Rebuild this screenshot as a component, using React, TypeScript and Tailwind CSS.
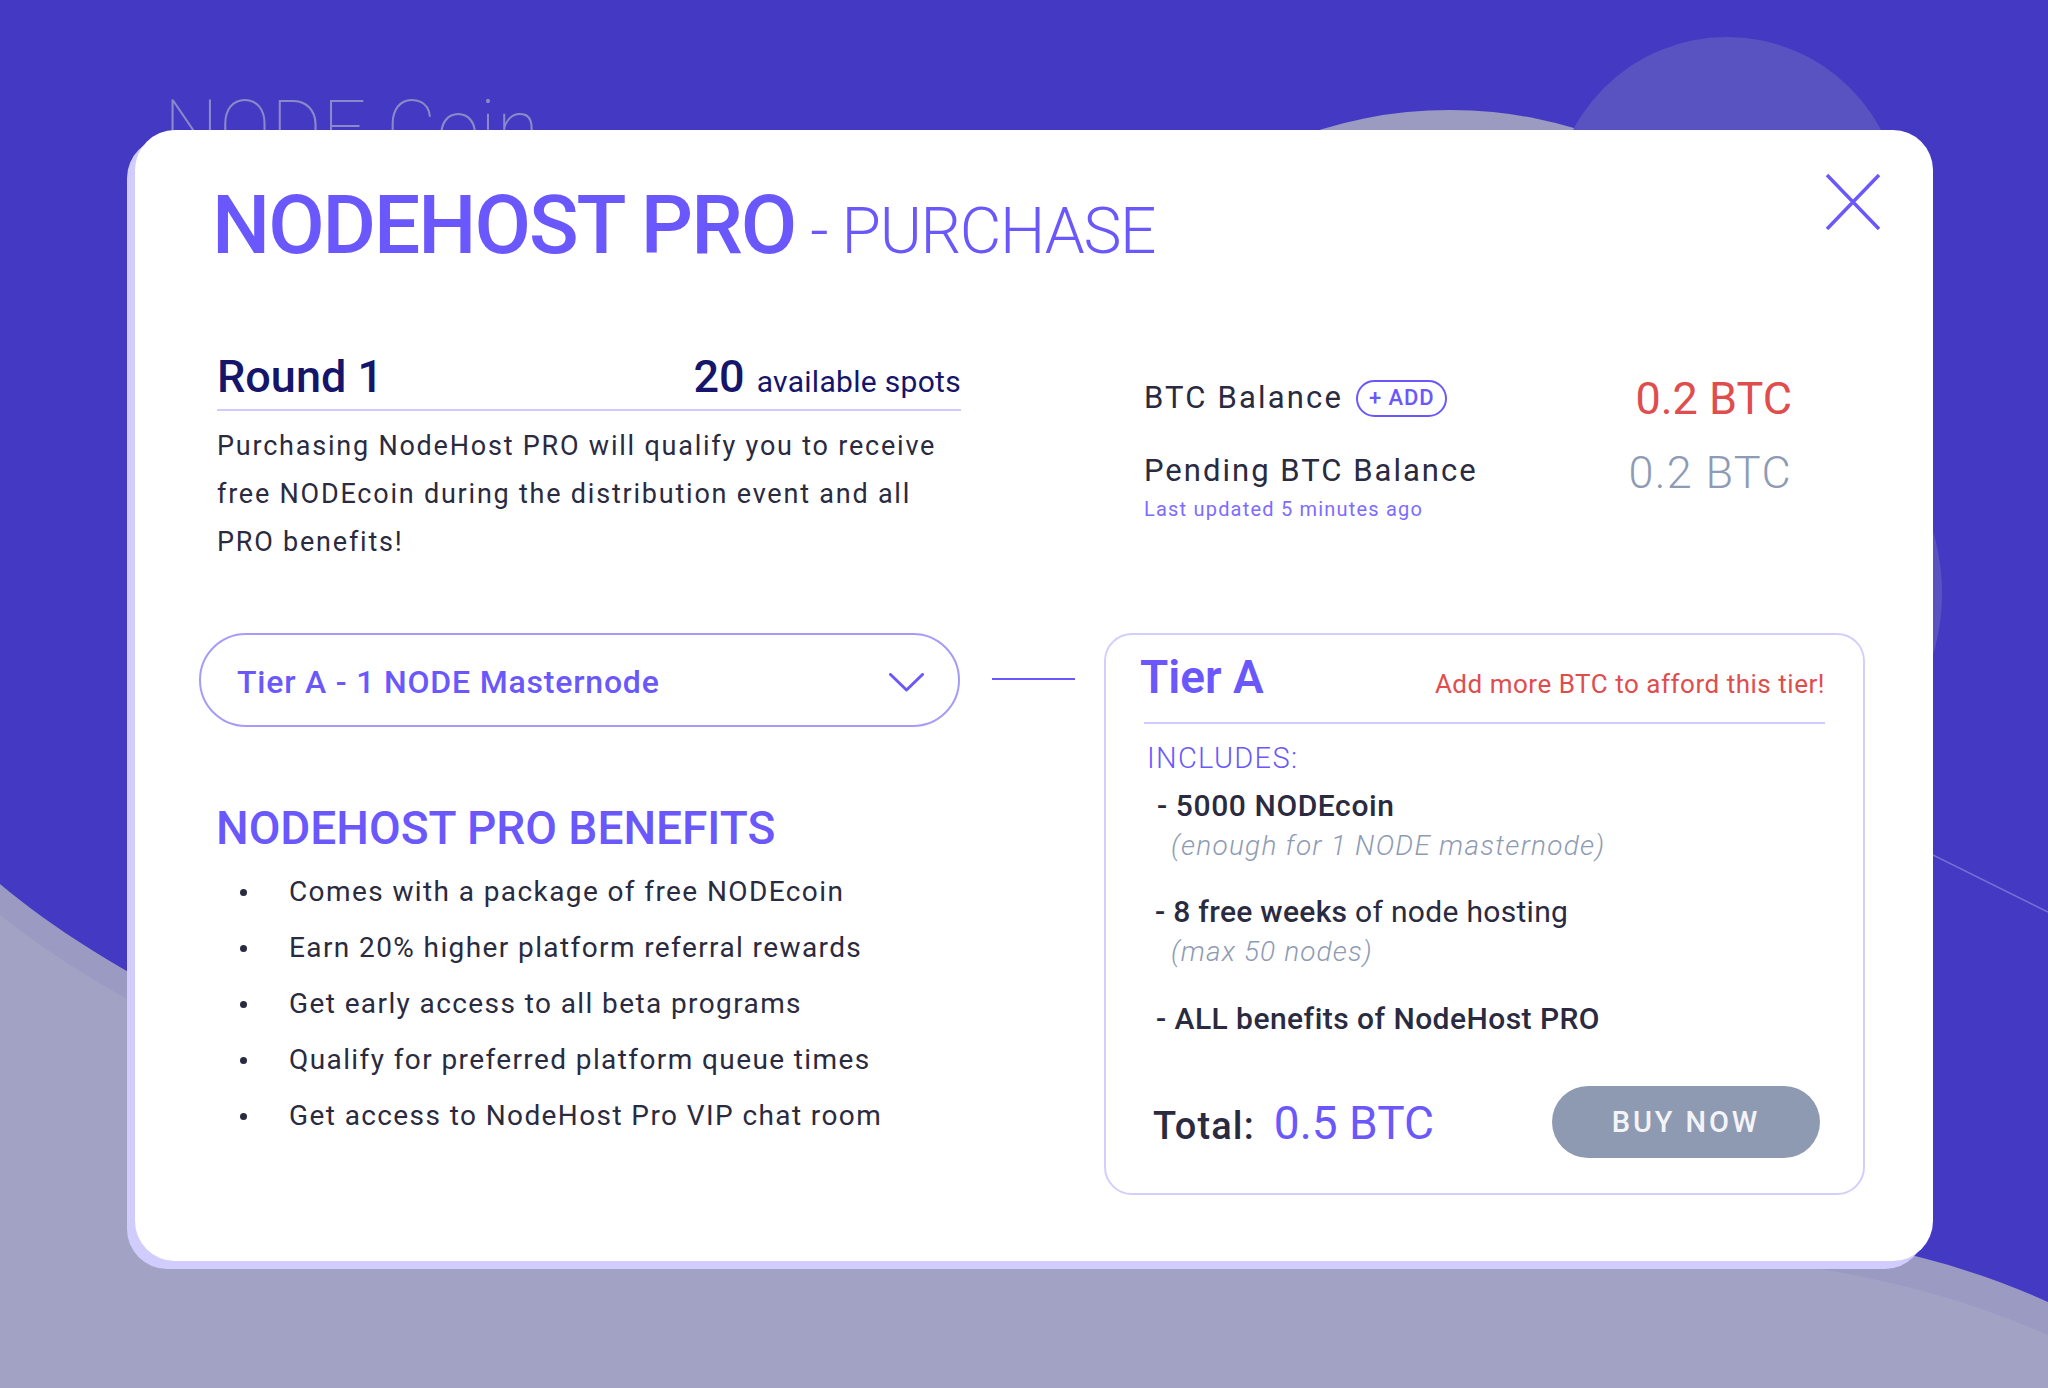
import React from "react";

const PURPLE = "text-[#6a58fd]";

function CloseIcon() {
  return (
    <svg width="56" height="56" viewBox="0 0 56 56" fill="none">
      <path d="M2 1 L54 55 M54 1 L2 55" stroke="#6a58fd" strokeWidth="3.5" strokeLinecap="butt" />
    </svg>
  );
}

function Chevron() {
  return (
    <svg width="35" height="19" viewBox="0 0 35 19" fill="none">
      <path d="M1.5 1.5 L17.5 17 L33.5 1.5" stroke="#6a58fd" strokeWidth="3" strokeLinecap="round" strokeLinejoin="round" />
    </svg>
  );
}

const benefits = [
  "Comes with a package of free NODEcoin",
  "Earn 20% higher platform referral rewards",
  "Get early access to all beta programs",
  "Qualify for preferred platform queue times",
  "Get access to NodeHost Pro VIP chat room",
];

export default function App() {
  return (
    <div className="relative w-[2048px] h-[1388px] overflow-hidden bg-[#4439c3] font-['Roboto',sans-serif]">
      <svg className="absolute inset-0" width="2048" height="1388" viewBox="0 0 2048 1388">
        <circle cx="1450" cy="549" r="439" fill="#9b9bc1" />
        <circle cx="1727" cy="211" r="174" fill="#5953c1" />
        <circle cx="1724" cy="593" r="218" fill="#5953c1" />
        <line x1="1600" y1="690" x2="2048" y2="912" stroke="#7570d2" strokeWidth="1.5" />
        <path d="M0 884 C150 1010 500 1180 1000 1200 C1500 1220 1800 1190 2048 1302 L2048 1388 L0 1388 Z" fill="#9b9ac3" />
        <path d="M0 915 C150 1035 500 1205 1000 1225 C1500 1245 1800 1225 2048 1335 L2048 1388 L0 1388 Z" fill="#a2a2c5" />
      </svg>

      <div className="relative pt-[91px] pl-[164px] text-[77px] leading-[77px] font-thin tracking-[0.01em] text-[#8c89c9]">
        NODE Coin
      </div>

      <div className="absolute left-[135px] top-[130px] w-[1798px] h-[1131px] rounded-[40px] bg-white shadow-[-8px_8px_0_0_#d0cdfd] pt-[54px]">
        <button className="absolute top-[44px] right-[52px] w-[56px] h-[56px]">
          <CloseIcon />
        </button>

        <div className="flex items-baseline pl-[77px]">
          <span className={`text-[82px] leading-[82px] font-medium tracking-[-0.025em] ${PURPLE}`}>NODEHOST PRO</span>
          <span className={`ml-[15px] text-[64px] leading-[64px] font-light tracking-[-0.02em] ${PURPLE}`}>- PURCHASE</span>
        </div>

        <div className="flex mt-[89px] pl-[82px]">
          <div className="w-[744px]">
            <div className="flex items-baseline justify-between border-b-2 border-[#cfcbfc] pb-[10px] text-[#15156b]">
              <span className="text-[45px] leading-[44px] font-medium">Round 1</span>
              <span className="flex items-baseline">
                <span className="text-[45px] leading-[44px] font-medium">20</span>
                <span className="ml-[12px] text-[30px] leading-[30px] tracking-[0.01em]">available spots</span>
              </span>
            </div>
            <p className="mt-[11px] text-[27px] leading-[48px] tracking-[0.066em] text-[#2a2a40]">
              Purchasing NodeHost PRO will qualify you to receive
              <br />
              free NODEcoin during the distribution event and all
              <br />
              PRO benefits!
            </p>
          </div>

          <div className="ml-[183px] w-[648px] flex justify-between">
            <div className="mt-[23px] text-[#2a2a40]">
              <div className="flex items-center">
                <span className="text-[31px] leading-[40px] tracking-[0.07em]">BTC Balance</span>
                <span className={`ml-[13px] h-[37px] px-[11px] rounded-full border-2 border-[#6a58fd] flex items-center text-[22px] leading-none font-medium tracking-[0.04em] ${PURPLE}`}>
                  + ADD
                </span>
              </div>
              <div className="mt-[33px] text-[31px] leading-[40px] tracking-[0.065em]">Pending BTC Balance</div>
              <div className="mt-[5px] text-[20px] leading-[26px] tracking-[0.06em] text-[#7c6cff]">Last updated 5 minutes ago</div>
            </div>
            <div className="mt-[7px] text-right text-[45px] leading-[74px]">
              <div className="text-[#e04d4d]">0.2 BTC</div>
              <div className="text-[#8e9bb4] font-light tracking-[0.03em]">0.2 BTC</div>
            </div>
          </div>
        </div>

        <div className="mt-[67px] pl-[64px] flex items-start">
          <div className="w-[761px]">
            <div className="h-[94px] rounded-full border-2 border-[#a59cf7] flex items-center justify-between pl-[36px] pr-[34px] pt-[4px]">
              <span className={`text-[32px] leading-[32px] font-medium tracking-[0.025em] ${PURPLE}`}>Tier A - 1 NODE Masternode</span>
              <Chevron />
            </div>
            <h2 className={`mt-[78px] ml-[17px] text-[46px] leading-[46px] font-medium ${PURPLE}`}>NODEHOST PRO BENEFITS</h2>
            <ul className="mt-[13px] text-[#2a2a40]">
              {benefits.map((b) => (
                <li key={b} className="flex items-center h-[56px]">
                  <span className="ml-[41px] w-[7px] h-[7px] rounded-full bg-[#2a2a40]" />
                  <span className="ml-[42px] text-[28px] leading-[56px] tracking-[0.05em]">{b}</span>
                </li>
              ))}
            </ul>
          </div>

          <div className="mt-[45px] ml-[32px] w-[83px] h-[2px] bg-[#6a58fd]" />

          <div className="ml-[29px] w-[761px] h-[562px] rounded-[28px] border-2 border-[#d3cffd] px-[38px] pt-[19px] pb-[35px] flex flex-col">
            <div className="flex items-baseline justify-between border-b-2 border-[#cfcbfc] pb-[22px]">
              <span className={`-ml-[4px] text-[46px] leading-[46px] font-semibold ${PURPLE}`}>Tier A</span>
              <span className="text-[26px] leading-[26px] tracking-[0.02em] text-[#e04d4d]">Add more BTC to afford this tier!</span>
            </div>
            <div className={`mt-[20px] pl-[3px] text-[29px] leading-[29px] font-light tracking-[0.045em] ${PURPLE}`}>INCLUDES:</div>

            <div className="mt-[13px] pl-[13px] text-[#2a2a40]">
              <div className="text-[30px] leading-[40px] font-medium tracking-[0.02em]">- 5000 NODEcoin</div>
              <div className="pl-[14px] text-[28px] leading-[40px] italic font-light tracking-[0.045em] text-[#8e9bb4]">(enough for 1 NODE masternode)</div>
            </div>
            <div className="mt-[26px] pl-[11px] text-[#2a2a40]">
              <div className="text-[30px] leading-[40px] tracking-[0.01em]">
                <span className="font-medium">- 8 free weeks</span> of node hosting
              </div>
              <div className="pl-[16px] text-[28px] leading-[40px] italic font-light tracking-[0.04em] text-[#8e9bb4]">(max 50 nodes)</div>
            </div>
            <div className="mt-[27px] pl-[12px] text-[30px] leading-[40px] font-medium tracking-[0.015em] text-[#2a2a40]">
              - ALL benefits of NodeHost PRO
            </div>

            <div className="mt-auto flex items-center justify-between">
              <div className="pl-[9px] pt-[3px] flex items-baseline">
                <span className="text-[38px] leading-[38px] font-medium tracking-[0.03em] text-[#2a2a40]">Total:</span>
                <span className={`ml-[19px] text-[46px] leading-[45px] ${PURPLE}`}>0.5 BTC</span>
              </div>
              <button className="mr-[5px] w-[268px] h-[72px] rounded-full bg-[#8e9ab1] text-[29px] leading-none font-medium tracking-[0.1em] text-[#f4f4f8]">
                BUY NOW
              </button>
            </div>
          </div>
        </div>
      </div>
    </div>
  );
}
